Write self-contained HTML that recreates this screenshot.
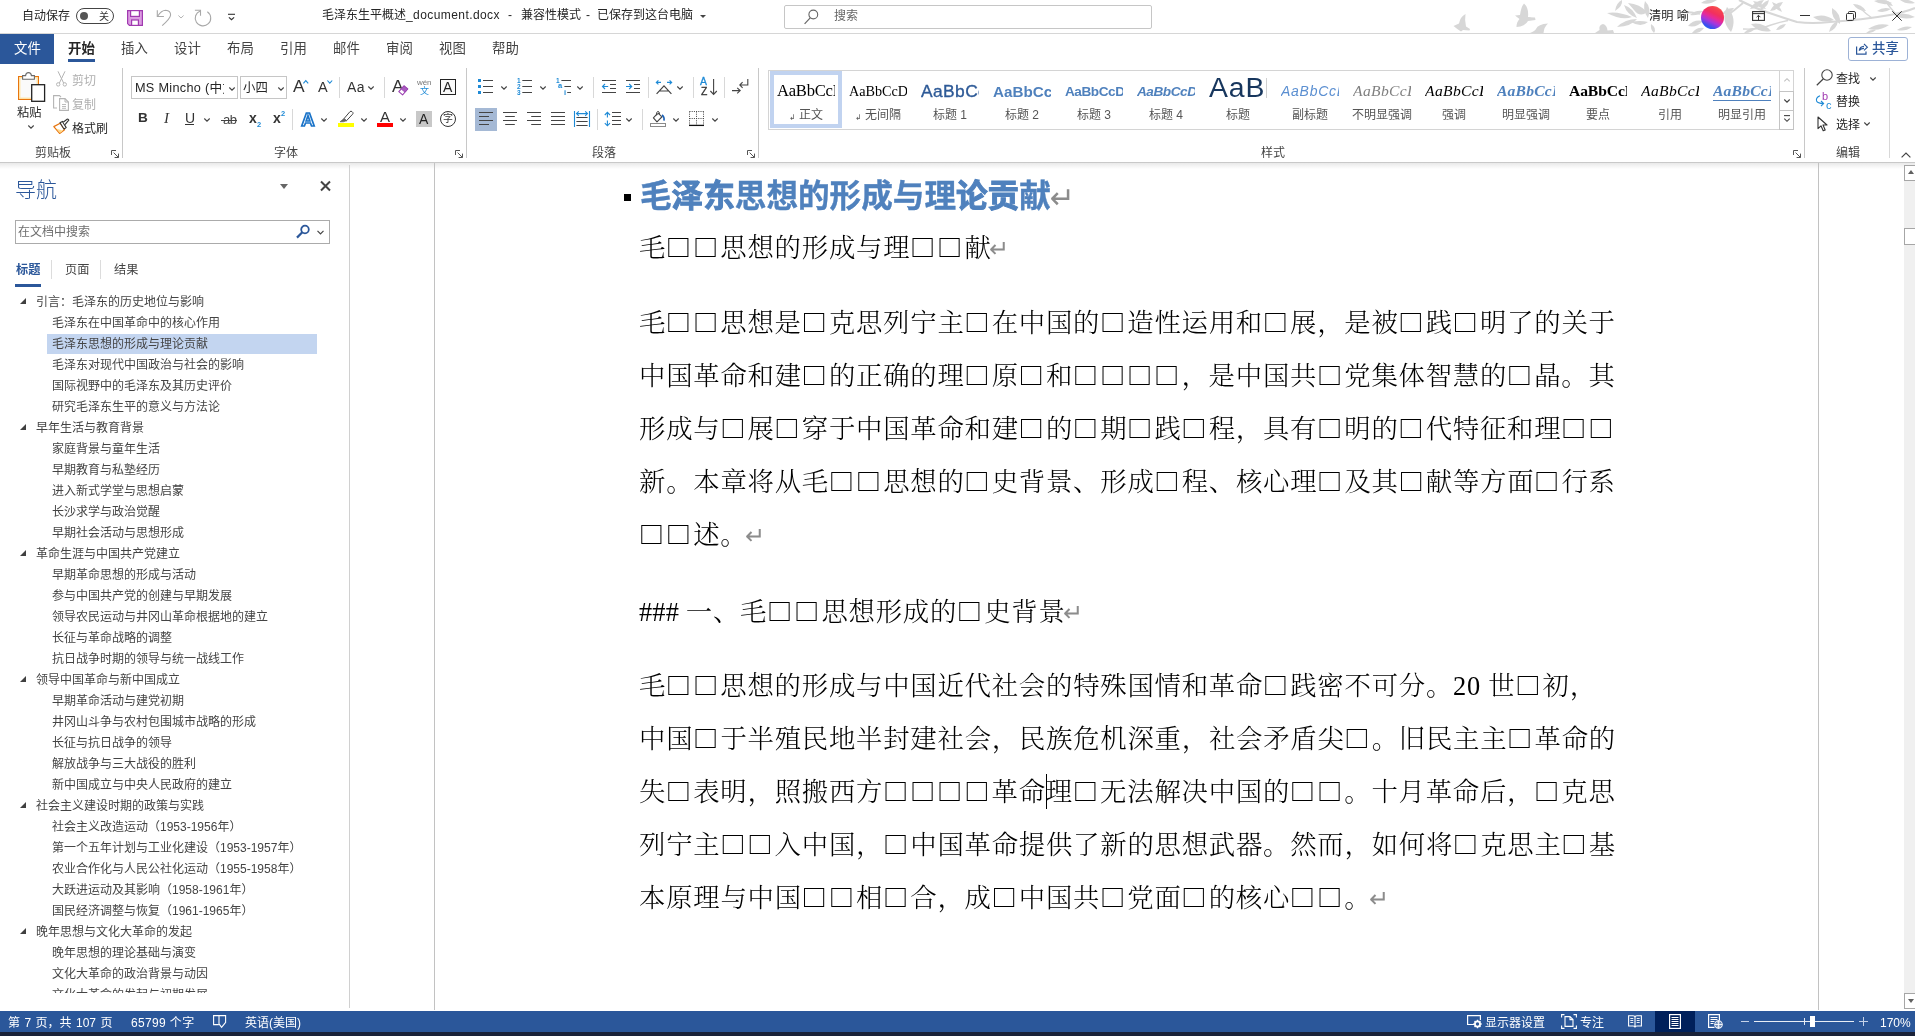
<!DOCTYPE html>
<html lang="zh-CN">
<head>
<meta charset="utf-8">
<title>毛泽东生平概述_document.docx - Word</title>
<style>
html,body{margin:0;padding:0}
body{width:1915px;height:1036px;overflow:hidden;background:#fff;position:relative;
 font-family:"Liberation Sans","Noto Sans CJK SC",sans-serif;font-size:12px;color:#262626;line-height:1}
.a{position:absolute;white-space:nowrap}
.a,.bt,.ni{will-change:transform}
svg{position:absolute;overflow:visible}
/* ---------- title bar ---------- */
#titlebar{left:0;top:0;width:1915px;height:33px;background:#fff;border-bottom:1px solid #d6d6d6}
.t12{font-size:12px;line-height:16px;height:16px}
/* ---------- tabs ---------- */
.tab{top:40px;font-size:13.4px;line-height:17px;color:#444}
/* ---------- ribbon ---------- */
#ribbon{left:0;top:64px;width:1915px;height:98px;background:#fff;border-bottom:1px solid #c9c9c9}
#rshadow{left:0;top:163px;width:1915px;height:6px;background:linear-gradient(#e9e9e9,#fff)}
.gsep{width:1px;background:#d2d2d2;top:68px;height:90px}
.glabel{top:145px;font-size:12px;line-height:14px;color:#444}
.rt{font-size:12px;line-height:14px;color:#262626}
.gray{color:#a6a6a6}
/* ---------- nav ---------- */
#nav{left:0;top:165px;width:349px;height:843px;background:transparent;border-right:1px solid #d0d0d0;overflow:hidden}
.ni{position:absolute;left:0;white-space:nowrap;font-size:12px;line-height:21px;height:21px;color:#444;margin-top:1.1px}
.l1{left:36px}.l2{left:52px}
.tri{margin-top:-1px;position:absolute;left:20px;width:0;height:0;border-left:6px solid transparent;border-bottom:6px solid #404040}
/* ---------- doc ---------- */
#page{left:434px;top:163px;width:1383px;height:847px;background:transparent;border-left:1px solid #c2c2c2;border-right:1px solid #c2c2c2}
.bt{position:absolute;left:638.8px;white-space:nowrap;font-family:"Liberation Serif","Noto Serif CJK SC",serif;font-size:26.4px;letter-spacing:0.75px;line-height:40px;height:40px;color:#000;font-weight:300;margin-top:1.2px}
.q{display:inline-block;width:27.1px;font-weight:400;font-family:"Noto Serif CJK SC",serif;font-size:25.2px;position:relative;left:-0.3px;letter-spacing:0;transform:translateY(0.2px) scaleY(0.92);line-height:30px;height:30px;vertical-align:baseline}
.pm{color:#8c8c8c;font-family:"DejaVu Sans",sans-serif;font-size:23.5px;position:relative;left:-2.5px}
.j{}
.hd{font-family:"Liberation Sans","Noto Sans CJK SC",sans-serif;font-weight:700;font-size:31.6px;line-height:40px;color:#4f81bd;-webkit-text-stroke:0.35px #4f81bd}
.pmh{font-weight:400;font-size:30px;-webkit-text-stroke:0;left:-1px;top:1px}
.hv{-webkit-text-stroke:1px #4f81bd}
/* ---------- status ---------- */
#status{left:0;top:1011px;width:1915px;height:21px;background:#2b579a}
#task{left:0;top:1032px;width:1915px;height:4px;background:#1a2238}
.st{top:1014.5px;font-size:12px;line-height:16px;color:#fff}
</style>
</head>
<body>
<!-- TITLEBAR -->
<div id="titlebar" class="a">
<svg style="left:0;top:0" width="1915" height="33" viewBox="0 0 1915 33">
<g fill="#d7d7d7" stroke="none">
<!-- birds -->
<path d="M1453.5 26 L1459 23.5 Q1460 17 1465.5 14 Q1464.5 20 1466 26.5 L1470 29 L1469.5 30.5 L1463 30 L1461 31.5 Q1457 29 1453.5 26 Z"/>
<path d="M1515 15.5 L1520 15 Q1521 7 1524 3.5 Q1529 8 1528 17 L1535 17.5 L1535.5 20 L1528 21 Q1525 26.5 1516.5 27 Q1516.5 22 1519.5 19 Z"/>
<path d="M1530 33 Q1535 31 1536 29 Q1538 24 1548 23.5 Q1544 27 1543.5 33 Z"/>
<path d="M1595 33 Q1598 31 1599.5 30 Q1598.5 25 1603 24 Q1607 25 1607.5 30.5 L1613 30 L1614 33 Z"/>
<!-- left leaf cluster -->
<path d="M1607 13 Q1618 11 1632 17 Q1622 21 1607 13 Z"/>
<path d="M1617 27 Q1625 19 1637 19 Q1632 26 1617 27 Z"/>
<path d="M1624 5 Q1633 8 1637 18 Q1627 15 1624 5 Z"/>
<path d="M1631 22 Q1640 20 1648 22 Q1641 28 1631 22 Z"/>
<path d="M1628 3 Q1640 4 1647 12 Q1640 18 1634 10 Z"/>
<path d="M1645 1 Q1652 8 1648 18 Q1642 10 1645 1 Z"/>
<path d="M1615 11 Q1616 3 1622 0 Q1623 6 1615 11 Z"/>
<path d="M1651 24 Q1657 28 1654 33 Q1650 29 1651 24 Z"/>
<!-- right leaves -->
<path d="M1690.0 15.0 Q1697.5 16.4 1703.0 11.0 Q1695.5 9.6 1690.0 15.0 Z"/>
<path d="M1688.0 26.0 Q1697.0 28.1 1703.0 21.0 Q1694.0 18.9 1688.0 26.0 Z"/>
<path d="M1692.0 33.0 Q1699.5 34.2 1704.0 28.0 Q1696.5 26.8 1692.0 33.0 Z"/>
<path d="M1701.0 3.0 Q1709.7 5.3 1717.0 0.0 Q1708.3 -2.3 1701.0 3.0 Z"/>
<path d="M1727.0 7.0 Q1720.3 20.9 1731.0 32.0 Q1737.7 18.1 1727.0 7.0 Z"/>
<path d="M1722.0 14.0 Q1729.8 14.6 1734.0 8.0 Q1726.2 7.4 1722.0 14.0 Z"/>
<path d="M1750.0 9.0 Q1759.6 8.5 1764.0 0.0 Q1754.4 0.5 1750.0 9.0 Z"/>
<path d="M1760.0 10.0 Q1767.6 7.8 1769.0 0.0 Q1761.4 2.2 1760.0 10.0 Z"/>
<path d="M1753.0 1.0 Q1757.5 8.3 1766.0 9.0 Q1761.5 1.7 1753.0 1.0 Z"/>
<path d="M1770.0 11.0 Q1779.2 10.4 1783.0 2.0 Q1773.8 2.6 1770.0 11.0 Z"/>
<path d="M1772.0 2.0 Q1774.5 9.5 1782.0 12.0 Q1779.5 4.5 1772.0 2.0 Z"/>
<path d="M1751.0 24.0 Q1758.9 33.5 1771.0 31.0 Q1763.1 21.5 1751.0 24.0 Z"/>
<path d="M1776.0 30.0 Q1782.8 30.0 1786.0 24.0 Q1779.2 24.0 1776.0 30.0 Z"/>
<path d="M1744.0 33.0 Q1751.2 33.5 1756.0 28.0 Q1748.8 27.5 1744.0 33.0 Z"/>
<path d="M1813.0 17.0 Q1822.7 24.2 1834.0 20.0 Q1824.3 12.8 1813.0 17.0 Z"/>
<path d="M1832.0 8.0 Q1830.8 18.6 1840.0 24.0 Q1841.2 13.4 1832.0 8.0 Z"/>
<path d="M1829.0 32.0 Q1836.7 29.1 1838.0 21.0 Q1830.3 23.9 1829.0 32.0 Z"/>
<path d="M1853.0 4.0 Q1857.5 11.2 1866.0 11.0 Q1861.5 3.8 1853.0 4.0 Z"/>
<path d="M1868.0 29.0 Q1879.4 31.7 1889.0 25.0 Q1877.6 22.3 1868.0 29.0 Z"/>
<path d="M1866.0 33.0 Q1871.7 34.0 1876.0 30.0 Q1870.3 29.0 1866.0 33.0 Z"/>
<path d="M1874.0 1.0 Q1882.5 6.1 1892.0 3.0 Q1883.5 -2.1 1874.0 1.0 Z"/>
<path d="M1877.0 11.0 Q1884.5 13.5 1891.0 9.0 Q1883.5 6.5 1877.0 11.0 Z"/>
<path d="M1883.0 0.0 Q1886.4 5.7 1893.0 6.0 Q1889.6 0.3 1883.0 0.0 Z"/>
<path d="M1894.0 15.0 Q1904.0 20.8 1915.0 17.0 Q1905.0 11.2 1894.0 15.0 Z"/>
<path d="M1900.0 0.0 Q1906.8 5.0 1915.0 3.0 Q1908.2 -2.0 1900.0 0.0 Z"/>
<path d="M1897.0 30.0 Q1905.2 32.0 1912.0 27.0 Q1903.8 25.0 1897.0 30.0 Z"/>
</g>
<g fill="none" stroke="#d7d7d7" stroke-width="1.8">
<path d="M1683 12 Q1692 12 1700 14"/>
<path d="M1725 17 Q1735 10 1743 3"/>
<path d="M1739 0 Q1752 7 1768 12.5 Q1784 18 1797 22 Q1812 24 1830 22 Q1862 20 1890 15 Q1905 12 1915 8" stroke-width="2"/>
<path d="M1743 29 Q1759 30 1771 25 Q1780 22 1788 20.5" stroke-width="1.4"/>
<path d="M1886 2 Q1892 10 1896 14" stroke-width="1.3"/>
<path d="M1860 8 Q1866 14 1872 18" stroke-width="1.2"/>
</g>
</svg>
<div class="a t12" style="left:21.5px;top:8px">自动保存</div>
<div class="a" style="left:76px;top:8px;width:36px;height:14px;border:1.2px solid #444;border-radius:9px"></div>
<div class="a" style="left:80px;top:12px;width:8px;height:8px;border-radius:4px;background:#555"></div>
<div class="a" style="left:98.5px;top:9.5px;font-size:10px;line-height:13px;color:#333">关</div>
<svg style="left:127px;top:10px" width="16" height="16" viewBox="0 0 16 16"><path d="M0.6 0.6 H15.4 V15.4 H2.4 L0.6 13.6 Z" fill="#dc9ce2" stroke="#a03ab0" stroke-width="1.2"/><rect x="3.6" y="0.6" width="8.8" height="5.8" fill="#fff" stroke="#a03ab0" stroke-width="1.2"/><rect x="4.6" y="10" width="6.8" height="5.4" fill="#fff" stroke="#a03ab0" stroke-width="1.2"/></svg>
<svg style="left:156px;top:9px" width="16" height="18" viewBox="0 0 16 18"><path d="M1.3 1.2 V7.5 H7.9" stroke="#a8a8a8" stroke-width="1.1" fill="none"/><path d="M1.6 7.3 Q5.4 1.3 9.7 1.3 Q14.7 1.8 14.6 6 Q14.4 9.4 6.2 16.6" stroke="#a8a8a8" stroke-width="1.1" fill="none"/></svg>
<svg style="left:177.5px;top:14.7px" width="6" height="4" viewBox="0 0 6 4"><path d="M0.4 0.5 L3 3 L5.6 0.5" stroke="#b4b4b4" stroke-width="1" fill="none"/></svg>
<svg style="left:194px;top:9px" width="18" height="18" viewBox="0 0 18 18"><path d="M0.9 1.3 H6.5 V6.7" stroke="#a8a8a8" stroke-width="1.1" fill="none"/><path d="M6.2 1.9 A7.75 7.75 0 1 0 13.35 2.75" stroke="#a8a8a8" stroke-width="1.1" fill="none"/></svg>
<svg style="left:228px;top:13px" width="7" height="8" viewBox="0 0 7 8"><path d="M0 1.3 H7" stroke="#333" stroke-width="1.1"/><path d="M0.9 4.4 L3.5 6.8 L6.1 4.4" stroke="#333" stroke-width="1.2" fill="none"/></svg>
<div class="a t12" style="left:322px;top:7px">毛泽东生平概述<span style="letter-spacing:0.42px">_document.docx</span></div>
<div class="a t12" style="left:508px;top:7px">-</div>
<div class="a t12" style="left:521px;top:7px">兼容性模式</div>
<div class="a t12" style="left:586px;top:7px">-</div>
<div class="a t12" style="left:597px;top:7px">已保存到这台电脑</div>
<div class="a" style="left:699.5px;top:15px;width:0;height:0;border-left:3px solid transparent;border-right:3px solid transparent;border-top:3px solid #444"></div>
<div class="a" style="left:784px;top:5px;width:366px;height:22px;border:1px solid #c6c6c6;border-radius:2px;background:#fff"></div>
<svg style="left:804px;top:9px" width="15" height="16" viewBox="0 0 15 16"><circle cx="9.3" cy="5.5" r="4.4" stroke="#666" stroke-width="1.1" fill="none"/><path d="M6.2 8.8 L0.6 14.8" stroke="#666" stroke-width="1.2"/></svg>
<div class="a t12" style="left:834px;top:8px;color:#666">搜索</div>
<div class="a t12" style="left:1649px;top:7.5px;font-size:12.2px">清明 喻</div>
<div class="a" style="left:1700.5px;top:5.5px;width:23.4px;height:23.4px;border-radius:50%;background:linear-gradient(27deg,#1e8cf0 4%,#3450f0 18%,#a836dc 36%,#e62a9a 50%,#f2305e 64%,#f6424e 80%,#fa7a62 100%)"></div>
<svg style="left:1752px;top:11px" width="13" height="10" viewBox="0 0 13 10"><rect x="0.6" y="0.6" width="11.8" height="8.8" stroke="#333" stroke-width="1.1" fill="none"/><path d="M0.6 2.6 H12.4" stroke="#333" stroke-width="1"/><path d="M6.5 9 V4.4 M4.6 6.2 L6.5 4.3 L8.4 6.2" stroke="#333" stroke-width="1" fill="none"/></svg>
<div class="a" style="left:1800px;top:15px;width:10px;height:1px;background:#333"></div>
<svg style="left:1846px;top:11px" width="10" height="10" viewBox="0 0 10 10"><rect x="0.5" y="2.5" width="7" height="7" rx="1" stroke="#333" stroke-width="1" fill="none"/><path d="M2.5 2.5 V1.5 Q2.5 0.5 3.5 0.5 H8 Q9.5 0.5 9.5 2 V6.5 Q9.5 7.5 8.5 7.5 H7.5" stroke="#333" stroke-width="1" fill="none"/></svg>
<svg style="left:1892px;top:11px" width="10" height="10" viewBox="0 0 10 10"><path d="M0.3 0.3 L9.7 9.7 M9.7 0.3 L0.3 9.7" stroke="#333" stroke-width="1" fill="none"/></svg>
</div>
<!-- TABS -->
<div id="tabs">
<div class="a" style="left:0;top:34px;width:54px;height:30px;background:#2b579a"></div>
<div class="a tab" style="left:14px;color:#fff">文件</div>
<div class="a tab" style="left:68px;color:#262626;font-weight:700">开始</div>
<div class="a" style="left:68px;top:59px;width:27px;height:3px;background:#2b579a"></div>
<div class="a tab" style="left:120.5px">插入</div>
<div class="a tab" style="left:173.5px">设计</div>
<div class="a tab" style="left:226.5px">布局</div>
<div class="a tab" style="left:279.5px">引用</div>
<div class="a tab" style="left:332.5px">邮件</div>
<div class="a tab" style="left:385.5px">审阅</div>
<div class="a tab" style="left:438.5px">视图</div>
<div class="a tab" style="left:491.5px">帮助</div>
<div class="a" style="left:1848px;top:37px;width:58px;height:22px;border:1px solid #9db2d6;border-radius:3px;background:#fff"></div>
<svg style="left:1856px;top:42px" width="13" height="13" viewBox="0 0 13 13"><path d="M0.6 4.6 V12.2 H10 V9.4" stroke="#2b579a" stroke-width="1.2" fill="none"/><path d="M3.2 8.6 Q3.8 4.6 8 4.4 M3.2 8.6 Q5 6.4 8 6.4 M8 2 L11.4 5.2 L8 8.4" stroke="#2b579a" stroke-width="1.1" fill="none"/></svg>
<div class="a" style="left:1872px;top:40px;font-size:13.4px;line-height:17px;color:#2b579a;font-weight:500">共享</div>
</div>
<!-- RIBBON -->
<div id="ribbon" class="a"></div>
<!--RIB-->
<svg style="left:17px;top:71px" width="30" height="32" viewBox="0 0 30 32"><rect x="1.6" y="5.6" width="19.8" height="22.8" fill="#fafafa" stroke="#e8750e" stroke-width="1.2"/><rect x="2.8" y="6.8" width="17.4" height="20.4" fill="none" stroke="#ffe3a0" stroke-width="1.2"/><path d="M5.6 8.2 V4.6 H8.6 Q8.8 1.6 11.5 1.6 Q14.2 1.6 14.4 4.6 H17.4 V8.2 Z" fill="#fff" stroke="#6a6a6a" stroke-width="1.1"/><rect x="14.7" y="13.7" width="12.9" height="16.6" fill="#fff" stroke="#222" stroke-width="1.3"/></svg>
<div class="a rt" style="left:16.5px;top:105.5px;font-size:12.2px">粘贴</div>
<svg style="left:27.5px;top:124.6px" width="6" height="4" viewBox="0 0 6 4"><path d="M0.3 0.5 L3 3.2 L5.7 0.5" stroke="#444" stroke-width="1.1" fill="none"/></svg>
<svg style="left:56px;top:71px" width="11" height="16" viewBox="0 0 11 16"><path d="M2 0.3 L7.6 12 M9 0.3 L3.4 12" stroke="#b4b4b4" stroke-width="1" fill="none"/><circle cx="2.2" cy="13.4" r="1.7" stroke="#b4b4b4" stroke-width="1" fill="none"/><circle cx="8.8" cy="13.4" r="1.7" stroke="#b4b4b4" stroke-width="1" fill="none"/></svg>
<div class="a rt" style="left:72px;top:74px;color:#b0b0b0">剪切</div>
<svg style="left:53px;top:95px" width="17" height="17" viewBox="0 0 17 17"><path d="M4 13 H0.6 V0.6 H6.5 L8 2.2" stroke="#b4b4b4" stroke-width="1.1" fill="none"/><path d="M6.6 3.6 H12 L15.4 7 V15.4 H6.6 Z" fill="#fff" stroke="#b4b4b4" stroke-width="1.1"/><path d="M12 3.6 V7 H15.4" stroke="#b4b4b4" stroke-width="1" fill="none"/><path d="M9 9.5 H13 M9 11.5 H13 M9 13.3 H13" stroke="#b4b4b4" stroke-width="0.9"/></svg>
<div class="a rt" style="left:72px;top:98px;color:#b0b0b0">复制</div>
<svg style="left:53px;top:118px" width="17" height="17" viewBox="0 0 17 17"><path d="M0.8 8.6 L7.2 5.2 L11.6 11.8 L6.6 15.4 Z" fill="#fff" stroke="#e8750e" stroke-width="1.2" stroke-linejoin="round"/><path d="M3.2 10.6 L10 12.8 L6.8 15 Z" fill="#ffd98a" stroke="none"/><path d="M7 4.8 L9.4 3.4 L13.2 9.6 L11 11 Z" fill="#fff" stroke="#333" stroke-width="1.1" stroke-linejoin="round"/><path d="M10.2 4.2 L14 1.2 Q15.4 0.8 15.8 2.2 L12 6.6" fill="#fff" stroke="#333" stroke-width="1.1"/></svg>
<div class="a rt" style="left:72px;top:121.5px;">格式刷</div>
<div class="a glabel" style="left:35px;top:146px;">剪贴板</div>
<svg style="left:111px;top:150px" width="8" height="8" viewBox="0 0 8 8"><path d="M0.5 5 V0.5 H5" stroke="#555" stroke-width="1" fill="none"/><path d="M2.6 2.6 L7.4 7.4 M7.5 3.6 V7.5 H3.6" stroke="#555" stroke-width="1" fill="none"/></svg>
<div class="a" style="left:122px;top:68px;width:1px;height:90px;background:#c8c8c8"></div>
<div class="a" style="left:131px;top:76px;width:105px;height:21px;border:1px solid #c6c6c6;background:#fff"></div>
<div class="a" style="left:134.5px;top:79.5px;width:88.5px;height:18px;overflow:hidden;font-size:12.7px;line-height:17px;color:#262626;letter-spacing:0.3px">MS Mincho (中文正文)</div>
<svg style="left:228.5px;top:86.5px" width="6" height="4" viewBox="0 0 6 4"><path d="M0.3 0.5 L3 3.2 L5.7 0.5" stroke="#444" stroke-width="1.1" fill="none"/></svg>
<div class="a" style="left:240px;top:76px;width:45px;height:21px;border:1px solid #c6c6c6;background:#fff"></div>
<div class="a" style="left:243px;top:80px;font-size:12.4px;line-height:17px;color:#262626">小四</div>
<svg style="left:277.5px;top:86.5px" width="6" height="4" viewBox="0 0 6 4"><path d="M0.3 0.5 L3 3.2 L5.7 0.5" stroke="#444" stroke-width="1.1" fill="none"/></svg>
<div class="a" style="left:292.8px;top:75.8px;font-size:17.4px;line-height:20px;color:#333">A</div>
<svg style="left:303px;top:80px" width="6" height="4" viewBox="0 0 6 4"><path d="M0.4 3.4 L2.8 0.7 L5.2 3.4" stroke="#1e8ad6" stroke-width="1.1" fill="none"/></svg>
<div class="a" style="left:318px;top:79px;font-size:14.5px;line-height:16px;color:#333">A</div>
<svg style="left:327px;top:80px" width="6" height="4" viewBox="0 0 6 4"><path d="M0.4 0.5 L2.8 3.2 L5.2 0.5" stroke="#1e8ad6" stroke-width="1.1" fill="none"/></svg>
<div class="a" style="left:339px;top:77px;width:1px;height:21px;background:#d8d8d8"></div>
<div class="a" style="left:347px;top:79px;font-size:14px;line-height:16px;color:#333;letter-spacing:0.3px">Aa</div>
<svg style="left:367.5px;top:86px" width="6" height="4" viewBox="0 0 6 4"><path d="M0.3 0.5 L3 3.2 L5.7 0.5" stroke="#444" stroke-width="1.1" fill="none"/></svg>
<div class="a" style="left:384px;top:77px;width:1px;height:21px;background:#d8d8d8"></div>
<div class="a" style="left:391.8px;top:75.6px;font-size:17.4px;line-height:20px;color:#333">A</div>
<svg style="left:398px;top:85px" width="11" height="11" viewBox="0 0 11 11"><path d="M6 0.8 L9.8 4 L4.6 9.8 L0.8 6.6 Z" fill="#fff" stroke="#9a3fb0" stroke-width="1.1" stroke-linejoin="round"/><path d="M6 0.8 L9.8 4 L7 7.2 L3.2 4 Z" fill="#a85cc0" stroke="#9a3fb0" stroke-width="0.8" stroke-linejoin="round"/></svg>
<div class="a" style="left:417px;top:78px;font-size:8px;line-height:9px;color:#777;letter-spacing:-0.1px">wén</div>
<div class="a" style="left:419.5px;top:86px;font-size:9px;line-height:10px;color:#1e8ad6">文</div>
<div class="a" style="left:440px;top:79px;width:14px;height:14px;border:1.2px solid #222;background:#fafafa"></div>
<div class="a" style="left:443.4px;top:80px;font-size:14px;line-height:15px;color:#222">A</div>
<div class="a" style="left:138.2px;top:109px;font-size:13.6px;line-height:18px;color:#333;font-weight:700">B</div>
<div class="a" style="left:163.5px;top:109px;font-size:15px;line-height:18px;color:#333;font-style:italic;font-family:'Liberation Serif',serif">I</div>
<div class="a" style="left:184.5px;top:109px;font-size:14px;line-height:18px;color:#333">U</div>
<div class="a" style="left:185px;top:124px;width:9px;height:1px;background:#333"></div>
<svg style="left:204.3px;top:118px" width="6" height="4" viewBox="0 0 6 4"><path d="M0.3 0.5 L3 3.2 L5.7 0.5" stroke="#444" stroke-width="1.1" fill="none"/></svg>
<div class="a" style="left:222.5px;top:111px;font-size:13px;line-height:18px;color:#444;letter-spacing:-0.5px">ab</div>
<div class="a" style="left:221px;top:120px;width:16px;height:1px;background:#444"></div>
<div class="a" style="left:249.3px;top:108.6px;font-size:14px;line-height:18px;color:#333;font-weight:700">x</div>
<div class="a" style="left:256.5px;top:120.6px;font-size:7.5px;line-height:8px;color:#1e8ad6;font-weight:700">2</div>
<div class="a" style="left:273.3px;top:108.6px;font-size:14px;line-height:18px;color:#333;font-weight:700">x</div>
<div class="a" style="left:280.5px;top:110px;font-size:7.5px;line-height:8px;color:#1e8ad6;font-weight:700">2</div>
<div class="a" style="left:292px;top:109px;width:1px;height:21px;background:#d8d8d8"></div>
<svg style="left:299px;top:110px" width="18" height="17" viewBox="0 0 18 17"><text x="9" y="15.6" text-anchor="middle" font-family="Liberation Sans, sans-serif" font-weight="700" font-size="18.6" fill="#fff" stroke="#1a73c8" stroke-width="1.7">A</text></svg>
<svg style="left:320.5px;top:118px" width="6" height="4" viewBox="0 0 6 4"><path d="M0.3 0.5 L3 3.2 L5.7 0.5" stroke="#444" stroke-width="1.1" fill="none"/></svg>
<svg style="left:337px;top:110px" width="18" height="18" viewBox="0 0 18 18"><rect x="1" y="13" width="16" height="4" fill="#ffff00"/><path d="M7 8.6 L13 1.6 Q14 0.8 15 1.6 L15.8 2.4 Q16.4 3.4 15.6 4.2 L9.4 10.8 Z" fill="#fff" stroke="#444" stroke-width="1"/><path d="M7 8.6 L9.4 10.8 L6.4 11.8 L3 11.8 Z" fill="#666" stroke="#555" stroke-width="0.6"/></svg>
<svg style="left:360.5px;top:118px" width="6" height="4" viewBox="0 0 6 4"><path d="M0.3 0.5 L3 3.2 L5.7 0.5" stroke="#444" stroke-width="1.1" fill="none"/></svg>
<div class="a" style="left:380.3px;top:107.7px;font-size:15px;line-height:18px;color:#333">A</div>
<div class="a" style="left:377px;top:123px;width:16px;height:4px;background:#ff0000"></div>
<svg style="left:399.5px;top:118px" width="6" height="4" viewBox="0 0 6 4"><path d="M0.3 0.5 L3 3.2 L5.7 0.5" stroke="#444" stroke-width="1.1" fill="none"/></svg>
<div class="a" style="left:416px;top:111px;width:16px;height:16px;background:#c8c8c8"></div>
<div class="a" style="left:419.3px;top:112px;font-size:14px;line-height:15px;color:#222">A</div>
<div class="a" style="left:440px;top:111px;width:14px;height:14px;border:1.1px solid #333;border-radius:50%"></div>
<div class="a" style="left:443.2px;top:113.4px;font-size:10px;line-height:11px;color:#333">字</div>
<div class="a glabel" style="left:274px;top:145.6px;">字体</div>
<svg style="left:455px;top:150px" width="8" height="8" viewBox="0 0 8 8"><path d="M0.5 5 V0.5 H5" stroke="#555" stroke-width="1" fill="none"/><path d="M2.6 2.6 L7.4 7.4 M7.5 3.6 V7.5 H3.6" stroke="#555" stroke-width="1" fill="none"/></svg>
<div class="a" style="left:466px;top:68px;width:1px;height:90px;background:#c8c8c8"></div>
<svg style="left:0;top:0" width="800" height="164" viewBox="0 0 800 164"><rect x="478" y="79.0" width="3" height="3" fill="#1e8ad6"/><rect x="478" y="85.0" width="3" height="3" fill="#1e8ad6"/><rect x="478" y="91.0" width="3" height="3" fill="#1e8ad6"/><path d="M483 80.5 H493 M483 86.5 H493 M483 92.5 H493 " stroke="#444" stroke-width="1"/><path d="M522.3 80.5 H532 M522.3 86.5 H532 M522.3 92.5 H532 " stroke="#444" stroke-width="1"/><path d="M561.4 80.5 H571 M564.4 86.5 H571 M567.2 92.5 H571 " stroke="#444" stroke-width="1"/><path d="M602 80.5 H616 M610 84.5 H616 M610 88.5 H616 M602 92.5 H616" stroke="#444" stroke-width="1"/><path d="M608.2 86.5 H602.6 M605 84 L602.5 86.5 L605 89" stroke="#1e8ad6" stroke-width="1.1" fill="none"/><path d="M626 80.5 H640 M634 84.5 H640 M634 88.5 H640 M626 92.5 H640" stroke="#444" stroke-width="1"/><path d="M626 86.5 H631.6 M629.2 84 L631.7 86.5 L629.2 89" stroke="#1e8ad6" stroke-width="1.1" fill="none"/><path d="M656.6 93.8 L664 85.8 L671.4 93.8 M659.6 91 H668.4" stroke="#444" stroke-width="1.2" fill="none"/><path d="M661 82.4 H656.4 M658.4 80.4 L656.3 82.4 L658.4 84.4" stroke="#1e8ad6" stroke-width="1.1" fill="none"/><path d="M667 82.4 H671.6 M669.6 80.4 L671.7 82.4 L669.6 84.4" stroke="#1e8ad6" stroke-width="1.1" fill="none"/><path d="M713.6 79 V94.4 M710.4 91 L713.6 94.4 L716.8 91" stroke="#444" stroke-width="1.1" fill="none"/><path d="M747.8 79 V85 H740 M742.6 82.2 L739.8 85 L742.6 87.8" stroke="#444" stroke-width="1.1" fill="none"/><path d="M732 90.6 H740 M737.2 87.8 L740.2 90.6 L737.2 93.4" stroke="#444" stroke-width="1.1" fill="none"/><rect x="475" y="108" width="22" height="23" fill="#a5b9d5"/><path d="M479 112.5 H493 M479 116.5 H489 M479 120.5 H493 M479 124.5 H489 " stroke="#444" stroke-width="1"/><path d="M503 112.5 H517 M505.2 116.5 H514.8 M503 120.5 H517 M505.2 124.5 H514.8 " stroke="#444" stroke-width="1"/><path d="M527 112.5 H541 M531.2 116.5 H541 M527 120.5 H541 M531.2 124.5 H541 " stroke="#444" stroke-width="1"/><path d="M551 112.5 H565 M551 116.5 H565 M551 120.5 H565 M551 124.5 H565 " stroke="#444" stroke-width="1"/><path d="M574.5 111 V127 M589.5 111 V127" stroke="#1e8ad6" stroke-width="1.1"/><path d="M576.6 113.6 H587.4 M578.8 111.4 L576.5 113.6 L578.8 115.8 M585.2 111.4 L587.5 113.6 L585.2 115.8" stroke="#1e8ad6" stroke-width="1.1" fill="none"/><path d="M576.4 117.5 H587.6 M576.4 121.5 H587.6 M576.4 125.5 H587.6" stroke="#444" stroke-width="1"/><path d="M607.4 112.6 V117.6 M607.4 120.4 V125.6 M604.8 115 L607.4 112.4 L610 115 M604.8 123.2 L607.4 125.8 L610 123.2" stroke="#1e8ad6" stroke-width="1.1" fill="none"/><path d="M612 112.5 H621 M612 116.5 H621 M612 120.5 H621 M612 124.5 H621 " stroke="#444" stroke-width="1"/><rect x="650.5" y="123.5" width="15" height="3" fill="#fff" stroke="#8a8a8a" stroke-width="1"/><path d="M656.4 114.6 L653.4 117.8 L657 121.8 L661.8 117 L658.6 113.4 Z" fill="#fff" stroke="#444" stroke-width="1.1" stroke-linejoin="round"/><path d="M656.6 115.4 Q656 111.6 658 111.4 Q659.6 111.4 659.4 114.4" fill="none" stroke="#444" stroke-width="1"/><path d="M662 115 Q664.6 117 664 120.6" fill="none" stroke="#1a5fb4" stroke-width="1.6"/><path d="M689.5 111.5 H704 M689.5 118.5 H704 M689.5 111.5 V125 M696.5 111.5 V125 M703.5 111.5 V125" stroke="#444" stroke-width="1" stroke-dasharray="1 1.2" fill="none"/><path d="M689 125.4 H704" stroke="#111" stroke-width="1.3"/></svg>
<div class="a" style="left:517px;top:77px;font-size:6.5px;line-height:8px;color:#1e8ad6;font-weight:700">1</div>
<div class="a" style="left:517px;top:83px;font-size:6.5px;line-height:8px;color:#1e8ad6;font-weight:700">2</div>
<div class="a" style="left:517px;top:89px;font-size:6.5px;line-height:8px;color:#1e8ad6;font-weight:700">3</div>
<div class="a" style="left:556px;top:77px;font-size:6.5px;line-height:8px;color:#1e8ad6;font-weight:700">1</div>
<div class="a" style="left:558.3px;top:82px;font-size:7.5px;line-height:8px;color:#1e8ad6;font-weight:700">a</div>
<div class="a" style="left:563.5px;top:89px;font-size:7.5px;line-height:8px;color:#1e8ad6;font-weight:700">i</div>
<div class="a" style="left:700.4px;top:77.4px;font-size:10.4px;line-height:10px;color:#1e8ad6;font-weight:400;-webkit-text-stroke:0.3px #1e8ad6">A</div>
<div class="a" style="left:700.8px;top:86.6px;font-size:10.4px;line-height:10px;color:#333;font-weight:400;-webkit-text-stroke:0.3px #333">Z</div>
<svg style="left:500.5px;top:86px" width="6" height="4" viewBox="0 0 6 4"><path d="M0.3 0.5 L3 3.2 L5.7 0.5" stroke="#444" stroke-width="1.1" fill="none"/></svg>
<svg style="left:539.6px;top:86px" width="6" height="4" viewBox="0 0 6 4"><path d="M0.3 0.5 L3 3.2 L5.7 0.5" stroke="#444" stroke-width="1.1" fill="none"/></svg>
<svg style="left:576.8px;top:86px" width="6" height="4" viewBox="0 0 6 4"><path d="M0.3 0.5 L3 3.2 L5.7 0.5" stroke="#444" stroke-width="1.1" fill="none"/></svg>
<svg style="left:676.8px;top:86px" width="6" height="4" viewBox="0 0 6 4"><path d="M0.3 0.5 L3 3.2 L5.7 0.5" stroke="#444" stroke-width="1.1" fill="none"/></svg>
<svg style="left:625.6px;top:118px" width="6" height="4" viewBox="0 0 6 4"><path d="M0.3 0.5 L3 3.2 L5.7 0.5" stroke="#444" stroke-width="1.1" fill="none"/></svg>
<svg style="left:672.6px;top:118px" width="6" height="4" viewBox="0 0 6 4"><path d="M0.3 0.5 L3 3.2 L5.7 0.5" stroke="#444" stroke-width="1.1" fill="none"/></svg>
<svg style="left:711.6px;top:118px" width="6" height="4" viewBox="0 0 6 4"><path d="M0.3 0.5 L3 3.2 L5.7 0.5" stroke="#444" stroke-width="1.1" fill="none"/></svg>
<div class="a" style="left:593px;top:77px;width:1px;height:21px;background:#d8d8d8"></div>
<div class="a" style="left:648px;top:77px;width:1px;height:21px;background:#d8d8d8"></div>
<div class="a" style="left:693px;top:77px;width:1px;height:21px;background:#d8d8d8"></div>
<div class="a" style="left:724px;top:77px;width:1px;height:21px;background:#d8d8d8"></div>
<div class="a" style="left:597px;top:109px;width:1px;height:21px;background:#d8d8d8"></div>
<div class="a" style="left:642px;top:109px;width:1px;height:21px;background:#d8d8d8"></div>
<div class="a glabel" style="left:592px;top:145.6px;">段落</div>
<svg style="left:747px;top:150px" width="8" height="8" viewBox="0 0 8 8"><path d="M0.5 5 V0.5 H5" stroke="#555" stroke-width="1" fill="none"/><path d="M2.6 2.6 L7.4 7.4 M7.5 3.6 V7.5 H3.6" stroke="#555" stroke-width="1" fill="none"/></svg>
<div class="a" style="left:758px;top:68px;width:1px;height:90px;background:#c8c8c8"></div>
<div class="a" style="left:768px;top:70px;width:1024px;height:58px;border:1px solid #d4d4d4;background:#fff"></div>
<div class="a" style="left:770px;top:71px;width:64px;height:49px;border:4px solid #c1d3f0;background:#fff"></div>
<svg style="left:777px;top:72px;overflow:hidden" width="58" height="34"><text x="0" y="24.4" font-family="Liberation Serif,serif" font-size="16.6" fill="#000" letter-spacing="-0.25">AaBbCcDd</text></svg>
<div class="a" style="left:770px;top:108px;width:72px;text-align:center;font-size:12px;line-height:14px;color:#555"><span style="font-family:'DejaVu Sans',sans-serif;font-size:8px;color:#555;position:relative;top:1px">↲</span> 正文</div>
<svg style="left:849px;top:72px;overflow:hidden" width="58" height="34"><text x="0" y="24.1" font-family="Liberation Serif,serif" font-size="14.2" fill="#000">AaBbCcDd</text></svg>
<div class="a" style="left:842px;top:108px;width:72px;text-align:center;font-size:12px;line-height:14px;color:#555"><span style="font-family:'DejaVu Sans',sans-serif;font-size:8px;color:#555;position:relative;top:1px">↲</span> 无间隔</div>
<svg style="left:921px;top:72px;overflow:hidden" width="58" height="34"><text x="0" y="25.2" font-family="Liberation Sans,sans-serif" font-size="17.4" fill="#2e5a97" letter-spacing="0.4" stroke="#2e5a97" stroke-width="0.35">AaBbCcDd</text></svg>
<div class="a" style="left:914px;top:108px;width:72px;text-align:center;font-size:12px;line-height:14px;color:#555">标题 1</div>
<svg style="left:993px;top:72px;overflow:hidden" width="58" height="34"><text x="0" y="24.6" font-family="Liberation Sans,sans-serif" font-size="15.2" fill="#4f81bd" font-weight="700">AaBbCcDd</text></svg>
<div class="a" style="left:986px;top:108px;width:72px;text-align:center;font-size:12px;line-height:14px;color:#555">标题 2</div>
<svg style="left:1065px;top:72px;overflow:hidden" width="58" height="34"><text x="0" y="24.1" font-family="Liberation Sans,sans-serif" font-size="13.6" fill="#4f81bd" font-weight="700" letter-spacing="-0.45">AaBbCcDd</text></svg>
<div class="a" style="left:1058px;top:108px;width:72px;text-align:center;font-size:12px;line-height:14px;color:#555">标题 3</div>
<svg style="left:1137px;top:72px;overflow:hidden" width="58" height="34"><text x="0" y="24.1" font-family="Liberation Sans,sans-serif" font-size="13.6" fill="#4f81bd" font-weight="700" font-style="italic" letter-spacing="-0.45">AaBbCcDd</text></svg>
<div class="a" style="left:1130px;top:108px;width:72px;text-align:center;font-size:12px;line-height:14px;color:#555">标题 4</div>
<svg style="left:1209px;top:72px;overflow:hidden" width="58" height="34"><text x="0" y="25.2" font-family="Liberation Sans,sans-serif" font-size="28.4" fill="#17365d" letter-spacing="0.9">AaB</text></svg>
<div class="a" style="left:1202px;top:108px;width:72px;text-align:center;font-size:12px;line-height:14px;color:#555">标题</div>
<svg style="left:1281px;top:72px;overflow:hidden" width="58" height="34"><text x="0" y="24.1" font-family="Liberation Sans,sans-serif" font-size="14" fill="#5b8fd1" font-style="italic" letter-spacing="0.75">AaBbCcDd</text></svg>
<div class="a" style="left:1274px;top:108px;width:72px;text-align:center;font-size:12px;line-height:14px;color:#555">副标题</div>
<svg style="left:1353px;top:72px;overflow:hidden" width="58" height="34"><text x="0" y="24.1" font-family="Liberation Serif,serif" font-size="15.6" fill="#808080" font-style="italic" letter-spacing="0.35">AaBbCcDd</text></svg>
<div class="a" style="left:1346px;top:108px;width:72px;text-align:center;font-size:12px;line-height:14px;color:#555">不明显强调</div>
<svg style="left:1425px;top:72px;overflow:hidden" width="58" height="34"><text x="0" y="24.1" font-family="Liberation Serif,serif" font-size="15.6" fill="#000" font-style="italic" letter-spacing="0.35">AaBbCcDd</text></svg>
<div class="a" style="left:1418px;top:108px;width:72px;text-align:center;font-size:12px;line-height:14px;color:#555">强调</div>
<svg style="left:1497px;top:72px;overflow:hidden" width="58" height="34"><text x="0" y="24.1" font-family="Liberation Serif,serif" font-size="15.6" fill="#4f81bd" font-weight="700" font-style="italic" letter-spacing="0.2">AaBbCcDd</text></svg>
<div class="a" style="left:1490px;top:108px;width:72px;text-align:center;font-size:12px;line-height:14px;color:#555">明显强调</div>
<svg style="left:1569px;top:72px;overflow:hidden" width="58" height="34"><text x="0" y="24.1" font-family="Liberation Serif,serif" font-size="15.6" fill="#000" font-weight="700" letter-spacing="-0.1">AaBbCcDd</text></svg>
<div class="a" style="left:1562px;top:108px;width:72px;text-align:center;font-size:12px;line-height:14px;color:#555">要点</div>
<svg style="left:1641px;top:72px;overflow:hidden" width="58" height="34"><text x="0" y="24.1" font-family="Liberation Serif,serif" font-size="15.6" fill="#000" font-style="italic" letter-spacing="0.35">AaBbCcDd</text></svg>
<div class="a" style="left:1634px;top:108px;width:72px;text-align:center;font-size:12px;line-height:14px;color:#555">引用</div>
<svg style="left:1713px;top:72px;overflow:hidden" width="58" height="34"><text x="0" y="24.1" font-family="Liberation Serif,serif" font-size="15.6" fill="#4f81bd" font-weight="700" font-style="italic" letter-spacing="0.2">AaBbCcDd</text></svg>
<div class="a" style="left:1706px;top:108px;width:72px;text-align:center;font-size:12px;line-height:14px;color:#555">明显引用</div>
<div class="a" style="left:1713px;top:100px;width:58px;height:1px;background:#4f81bd"></div>
<div class="a" style="left:1266px;top:78px;width:1px;height:20px;background:#d0d0d0"></div>
<div class="a" style="left:1779px;top:70px;width:13px;height:20px;border:1px solid #d4d4d4;background:#fff"></div>
<div class="a" style="left:1779px;top:91px;width:13px;height:18px;border:1px solid #c4c4c4;background:#fff"></div>
<div class="a" style="left:1779px;top:110px;width:13px;height:18px;border:1px solid #c4c4c4;background:#fff"></div>
<svg style="left:1783.5px;top:78px" width="6" height="4" viewBox="0 0 6 4"><path d="M0.3 3.4 L3 0.7 L5.7 3.4" stroke="#c0c0c0" stroke-width="1.1" fill="none"/></svg>
<svg style="left:1783.5px;top:98.6px" width="6" height="4" viewBox="0 0 6 4"><path d="M0.3 0.5 L3 3.2 L5.7 0.5" stroke="#444" stroke-width="1.1" fill="none"/></svg>
<svg style="left:1783.5px;top:115px" width="6" height="8" viewBox="0 0 6 8"><path d="M0 0.6 H6" stroke="#444" stroke-width="1.1"/><path d="M0.3 3.6 L3 6.3 L5.7 3.6" stroke="#444" stroke-width="1.1" fill="none"/></svg>
<div class="a glabel" style="left:1261px;top:145.6px;">样式</div>
<svg style="left:1793px;top:150px" width="8" height="8" viewBox="0 0 8 8"><path d="M0.5 5 V0.5 H5" stroke="#555" stroke-width="1" fill="none"/><path d="M2.6 2.6 L7.4 7.4 M7.5 3.6 V7.5 H3.6" stroke="#555" stroke-width="1" fill="none"/></svg>
<div class="a" style="left:1804px;top:68px;width:1px;height:90px;background:#c8c8c8"></div>
<svg style="left:1816px;top:69px" width="17" height="17" viewBox="0 0 17 17"><circle cx="11" cy="6" r="5.2" stroke="#444" stroke-width="1.1" fill="none"/><path d="M7.4 9.8 L0.8 16.2" stroke="#444" stroke-width="1.2"/></svg>
<div class="a rt" style="left:1835.5px;top:72px;">查找</div>
<svg style="left:1869.6px;top:76.6px" width="6" height="4" viewBox="0 0 6 4"><path d="M0.3 0.5 L3 3.2 L5.7 0.5" stroke="#444" stroke-width="1.1" fill="none"/></svg>
<div class="a" style="left:1821.5px;top:90px;font-size:11px;line-height:12px;color:#a03ab0">b</div>
<div class="a" style="left:1825.5px;top:98.5px;font-size:11px;line-height:12px;color:#1e8ad6">c</div>
<svg style="left:1815px;top:95px" width="11" height="13" viewBox="0 0 11 13"><path d="M5 0.8 Q0.6 2.6 1.6 6 Q2.6 8.4 8.4 8.6 M6 6 L8.6 8.6 L6 11.2" stroke="#1e8ad6" stroke-width="1.1" fill="none"/></svg>
<div class="a rt" style="left:1835.5px;top:95px;">替换</div>
<svg style="left:1817px;top:116px" width="12" height="16" viewBox="0 0 12 16"><path d="M1 1 V12.6 L4 9.8 L6.2 14.8 L8.2 13.9 L6 9 H10 Z" stroke="#333" stroke-width="1.1" fill="#fff" stroke-linejoin="round"/></svg>
<div class="a rt" style="left:1835.5px;top:118px;">选择</div>
<svg style="left:1863.8px;top:122.4px" width="6" height="4" viewBox="0 0 6 4"><path d="M0.3 0.5 L3 3.2 L5.7 0.5" stroke="#444" stroke-width="1.1" fill="none"/></svg>
<div class="a glabel" style="left:1835.5px;top:145.6px;">编辑</div>
<div class="a" style="left:1889px;top:68px;width:1px;height:90px;background:#d8d8d8"></div>
<svg style="left:1901px;top:152px" width="10" height="6" viewBox="0 0 10 6"><path d="M0.6 5.4 L5 1 L9.4 5.4" stroke="#444" stroke-width="1.2" fill="none"/></svg>
<!--/RIB-->
<div id="rshadow" class="a"></div>
<!-- NAV -->
<div id="nav" class="a">
<div class="a" style="left:15px;top:13px;font-size:21px;line-height:24px;color:#2b579a;font-weight:300">导航</div>
<div class="a" style="left:280px;top:19px;width:0;height:0;border-left:4.5px solid transparent;border-right:4.5px solid transparent;border-top:5px solid #666"></div>
<svg style="left:320px;top:16px" width="11" height="10" viewBox="0 0 11 10"><path d="M1 0.5 L10 9.5 M10 0.5 L1 9.5" stroke="#444" stroke-width="2" fill="none"/></svg>
<div class="a" style="left:15px;top:55px;width:313px;height:22px;border:1px solid #ababab;background:#fff"></div>
<div class="a" style="left:18px;top:59px;font-size:12px;line-height:16px;color:#6e6e6e">在文档中搜索</div>
<svg style="left:296px;top:59px" width="15" height="15" viewBox="0 0 15 15"><circle cx="9" cy="5.5" r="3.8" stroke="#2b579a" stroke-width="1.8" fill="none"/><path d="M6.3 8.3 L1 13.6" stroke="#2b579a" stroke-width="2.2" fill="none"/></svg>
<svg style="left:317px;top:65px" width="7" height="5" viewBox="0 0 7 5"><path d="M0.5 0.8 L3.5 3.8 L6.5 0.8" stroke="#444" stroke-width="1.2" fill="none"/></svg>
<div class="a" style="left:15.5px;top:97px;font-size:12.2px;line-height:16px;color:#2b579a;font-weight:700">标题</div>
<div class="a" style="left:15px;top:119px;width:26px;height:3px;background:#2b579a"></div>
<div class="a" style="left:51px;top:95px;width:1px;height:19px;background:#dcdcdc"></div>
<div class="a" style="left:100px;top:95px;width:1px;height:19px;background:#dcdcdc"></div>
<div class="a" style="left:64.5px;top:97px;font-size:12.2px;line-height:16px;color:#444">页面</div>
<div class="a" style="left:113.5px;top:97px;font-size:12.2px;line-height:16px;color:#444">结果</div>
<div class="a" style="left:0;top:126px;width:349px;height:702px;overflow:hidden">
<div class="a" style="left:47px;top:43px;width:270px;height:20px;background:#c3d5f0"></div>
<div class="tri" style="top:8px"></div><div class="ni l1" style="top:0px">引言：毛泽东的历史地位与影响</div>
<div class="ni l2" style="top:21px">毛泽东在中国革命中的核心作用</div>
<div class="ni l2" style="top:42px">毛泽东思想的形成与理论贡献</div>
<div class="ni l2" style="top:63px">毛泽东对现代中国政治与社会的影响</div>
<div class="ni l2" style="top:84px">国际视野中的毛泽东及其历史评价</div>
<div class="ni l2" style="top:105px">研究毛泽东生平的意义与方法论</div>
<div class="tri" style="top:134px"></div><div class="ni l1" style="top:126px">早年生活与教育背景</div>
<div class="ni l2" style="top:147px">家庭背景与童年生活</div>
<div class="ni l2" style="top:168px">早期教育与私塾经历</div>
<div class="ni l2" style="top:189px">进入新式学堂与思想启蒙</div>
<div class="ni l2" style="top:210px">长沙求学与政治觉醒</div>
<div class="ni l2" style="top:231px">早期社会活动与思想形成</div>
<div class="tri" style="top:260px"></div><div class="ni l1" style="top:252px">革命生涯与中国共产党建立</div>
<div class="ni l2" style="top:273px">早期革命思想的形成与活动</div>
<div class="ni l2" style="top:294px">参与中国共产党的创建与早期发展</div>
<div class="ni l2" style="top:315px">领导农民运动与井冈山革命根据地的建立</div>
<div class="ni l2" style="top:336px">长征与革命战略的调整</div>
<div class="ni l2" style="top:357px">抗日战争时期的领导与统一战线工作</div>
<div class="tri" style="top:386px"></div><div class="ni l1" style="top:378px">领导中国革命与新中国成立</div>
<div class="ni l2" style="top:399px">早期革命活动与建党初期</div>
<div class="ni l2" style="top:420px">井冈山斗争与农村包围城市战略的形成</div>
<div class="ni l2" style="top:441px">长征与抗日战争的领导</div>
<div class="ni l2" style="top:462px">解放战争与三大战役的胜利</div>
<div class="ni l2" style="top:483px">新中国成立与中央人民政府的建立</div>
<div class="tri" style="top:512px"></div><div class="ni l1" style="top:504px">社会主义建设时期的政策与实践</div>
<div class="ni l2" style="top:525px">社会主义改造运动（1953-1956年）</div>
<div class="ni l2" style="top:546px">第一个五年计划与工业化建设（1953-1957年）</div>
<div class="ni l2" style="top:567px">农业合作化与人民公社化运动（1955-1958年）</div>
<div class="ni l2" style="top:588px">大跃进运动及其影响（1958-1961年）</div>
<div class="ni l2" style="top:609px">国民经济调整与恢复（1961-1965年）</div>
<div class="tri" style="top:638px"></div><div class="ni l1" style="top:630px">晚年思想与文化大革命的发起</div>
<div class="ni l2" style="top:651px">晚年思想的理论基础与演变</div>
<div class="ni l2" style="top:672px">文化大革命的政治背景与动因</div>
<div class="ni l2" style="top:693px">文化大革命的发起与初期发展</div>
</div>
</div>
<!-- DOC -->
<div id="page" class="a"></div>
<div class="a" style="left:624px;top:194.4px;width:7px;height:6.6px;background:#000"></div>
<div class="a hd" style="left:640px;top:176.4px">毛<span class="hv">泽东</span>思想的形成与理<span class="hv">论贡</span>献<span class="pm pmh">↵</span></div>
<div class="bt" style="top:227px">毛<b class="q">□</b><b class="q">□</b>思想的形成与理<b class="q">□</b><b class="q">□</b>献<span class="pm">↵</span></div>
<div class="bt j" style="top:302px">毛<b class="q">□</b><b class="q">□</b>思想是<b class="q">□</b>克思列宁主<b class="q">□</b>在中国的<b class="q">□</b>造性运用和<b class="q">□</b>展，是被<b class="q">□</b>践<b class="q">□</b>明了的关于</div>
<div class="bt j" style="top:355px">中国革命和建<b class="q">□</b>的正确的理<b class="q">□</b>原<b class="q">□</b>和<b class="q">□</b><b class="q">□</b><b class="q">□</b><b class="q">□</b>，是中国共<b class="q">□</b>党集体智慧的<b class="q">□</b>晶。其</div>
<div class="bt j" style="top:408px">形成与<b class="q">□</b>展<b class="q">□</b>穿于中国革命和建<b class="q">□</b>的<b class="q">□</b>期<b class="q">□</b>践<b class="q">□</b>程，具有<b class="q">□</b>明的<b class="q">□</b>代特征和理<b class="q">□</b><b class="q">□</b></div>
<div class="bt j" style="top:461px">新。本章将从毛<b class="q">□</b><b class="q">□</b>思想的<b class="q">□</b>史背景、形成<b class="q">□</b>程、核心理<b class="q">□</b>及其<b class="q">□</b>献等方面<b class="q">□</b>行系</div>
<div class="bt" style="top:514px"><b class="q">□</b><b class="q">□</b>述。<span class="pm">↵</span></div>
<div class="bt" style="top:591px"><span style="letter-spacing:0.15px">### </span>一、毛<b class="q">□</b><b class="q">□</b>思想形成的<b class="q">□</b>史背景<span class="pm">↵</span></div>
<div class="bt j" style="top:665px">毛<b class="q">□</b><b class="q">□</b>思想的形成与中国近代社会的特殊国情和革命<b class="q">□</b>践密不可分。20 世<b class="q">□</b>初，</div>
<div class="bt j" style="top:718px">中国<b class="q">□</b>于半殖民地半封建社会，民族危机深重，社会矛盾尖<b class="q">□</b>。旧民主主<b class="q">□</b>革命的</div>
<div class="bt j" style="top:771px">失<b class="q">□</b>表明，照搬西方<b class="q">□</b><b class="q">□</b><b class="q">□</b><b class="q">□</b>革命理<b class="q">□</b>无法解决中国的<b class="q">□</b><b class="q">□</b>。十月革命后，<b class="q">□</b>克思</div>
<div class="bt j" style="top:824px">列宁主<b class="q">□</b><b class="q">□</b>入中国，<b class="q">□</b>中国革命提供了新的思想武器。然而，如何将<b class="q">□</b>克思主<b class="q">□</b>基</div>
<div class="bt" style="top:877px">本原理与中国<b class="q">□</b><b class="q">□</b>相<b class="q">□</b>合，成<b class="q">□</b>中国共<b class="q">□</b>党面<b class="q">□</b>的核心<b class="q">□</b><b class="q">□</b>。<span class="pm">↵</span></div>
<div class="a" style="left:1046px;top:774px;width:1px;height:35px;background:#000"></div>
<div class="a" style="left:1904px;top:165px;width:11px;height:843px;background:#f0f0f0"></div>
<div class="a" style="left:1904px;top:165px;width:14px;height:14px;border:1px solid #a6a6a6;background:#fff"></div>
<div class="a" style="left:1908px;top:170px;width:0;height:0;border-left:3.5px solid transparent;border-right:3.5px solid transparent;border-bottom:4px solid #606060"></div>
<div class="a" style="left:1904px;top:228px;width:14px;height:15px;border:1px solid #a6a6a6;background:#fff"></div>
<div class="a" style="left:1904px;top:993px;width:14px;height:14px;border:1px solid #a6a6a6;background:#fff"></div>
<div class="a" style="left:1908px;top:999px;width:0;height:0;border-left:3.5px solid transparent;border-right:3.5px solid transparent;border-top:4px solid #606060"></div>
<!-- STATUS -->
<div id="status" class="a"></div>
<div class="a st" style="left:7.6px;word-spacing:1.1px">第 7 页，共 107 页</div>
<div class="a st" style="left:131px;letter-spacing:0.35px">65799 个字</div>
<svg style="left:213px;top:1015px" width="14" height="14" viewBox="0 0 14 14"><path d="M5.8 9.6 H0.6 V0.6 H12.6 V7.4 M6 0.6 V9.4" stroke="#fff" stroke-width="1.1" fill="none"/><path d="M6.2 9.2 L8.6 12.4 L12.8 7.2" stroke="#fff" stroke-width="1.1" fill="none"/></svg>
<div class="a st" style="left:245px">英语(美国)</div>
<svg style="left:1467px;top:1014px" width="16" height="15" viewBox="0 0 16 15"><path d="M7 10.5 H0.6 V1.6 H13.4 V6" stroke="#fff" stroke-width="1.2" fill="none"/><circle cx="10.5" cy="10" r="2.6" stroke="#fff" stroke-width="1.8" fill="none"/><path d="M10.5 5.8 V7 M10.5 13 V14.2 M6.3 10 H7.5 M13.5 10 H14.7 M7.6 7.1 L8.4 7.9 M12.6 12.1 L13.4 12.9 M7.6 12.9 L8.4 12.1 M12.6 7.9 L13.4 7.1" stroke="#fff" stroke-width="1.4"/></svg>
<div class="a st" style="left:1485px">显示器设置</div>
<svg style="left:1561px;top:1014px" width="16" height="15" viewBox="0 0 16 15"><path d="M3.5 0.6 H0.6 V3.5 M12.5 0.6 H15.4 V3.5 M3.5 14.4 H0.6 V11.5 M12.5 14.4 H15.4 V11.5" stroke="#fff" stroke-width="1.1" fill="none"/><path d="M4 2.6 H9 L12 5.6 V12.4 H4 Z M9 2.6 V5.6 H12" stroke="#fff" stroke-width="1.1" fill="none"/></svg>
<div class="a st" style="left:1580px">专注</div>
<svg style="left:1628px;top:1015px" width="14" height="13" viewBox="0 0 14 13"><path d="M0.6 0.8 H5 Q7 0.8 7 2.5 Q7 0.8 9 0.8 H13.4 V11 H9 Q7 11 7 12.4 Q7 11 5 11 H0.6 Z M7 2.5 V12" stroke="#fff" stroke-width="1.1" fill="none"/><path d="M2.3 3.5 H5.3 M2.3 5.5 H5.3 M2.3 7.5 H5.3 M8.7 3.5 H11.7 M8.7 5.5 H11.7 M8.7 7.5 H11.7" stroke="#fff" stroke-width="0.9"/></svg>
<div class="a" style="left:1655px;top:1011px;width:40px;height:21px;background:#00205b"></div>
<svg style="left:1669px;top:1014px" width="12" height="15" viewBox="0 0 12 15"><rect x="0.6" y="0.6" width="10.8" height="13.8" stroke="#fff" stroke-width="1.2" fill="none"/><path d="M2.5 3.5 H9.5 M2.5 5.5 H9.5 M2.5 7.5 H9.5 M2.5 9.5 H9.5 M2.5 11.5 H9.5" stroke="#fff" stroke-width="1"/></svg>
<svg style="left:1708px;top:1014px" width="15" height="15" viewBox="0 0 15 15"><path d="M6.5 13.4 H0.6 V0.6 H11.4 V6.5" stroke="#fff" stroke-width="1.2" fill="none"/><path d="M2.5 3.5 H9.5 M2.5 5.5 H9.5 M2.5 7.5 H6.5 M2.5 9.5 H5.5" stroke="#fff" stroke-width="1"/><circle cx="10.5" cy="10.5" r="3.7" stroke="#fff" stroke-width="1.1" fill="none"/><path d="M6.8 10.5 H14.2 M10.5 6.8 V14.2" stroke="#fff" stroke-width="0.9"/><ellipse cx="10.5" cy="10.5" rx="1.6" ry="3.7" stroke="#fff" stroke-width="0.8" fill="none"/></svg>
<div class="a" style="left:1741px;top:1021px;width:8px;height:1px;background:#c5d2e8"></div>
<div class="a" style="left:1754px;top:1021px;width:100px;height:1px;background:#e8edf5"></div>
<div class="a" style="left:1804px;top:1018px;width:1px;height:7px;background:#e8edf5"></div>
<div class="a" style="left:1810px;top:1016px;width:5px;height:11px;background:#fff"></div>
<div class="a" style="left:1859px;top:1021px;width:9px;height:1px;background:#c5d2e8"></div>
<div class="a" style="left:1863px;top:1017px;width:1px;height:9px;background:#c5d2e8"></div>
<div class="a st" style="left:1880px">170%</div>
<div id="task" class="a"></div>
</body>
</html>
